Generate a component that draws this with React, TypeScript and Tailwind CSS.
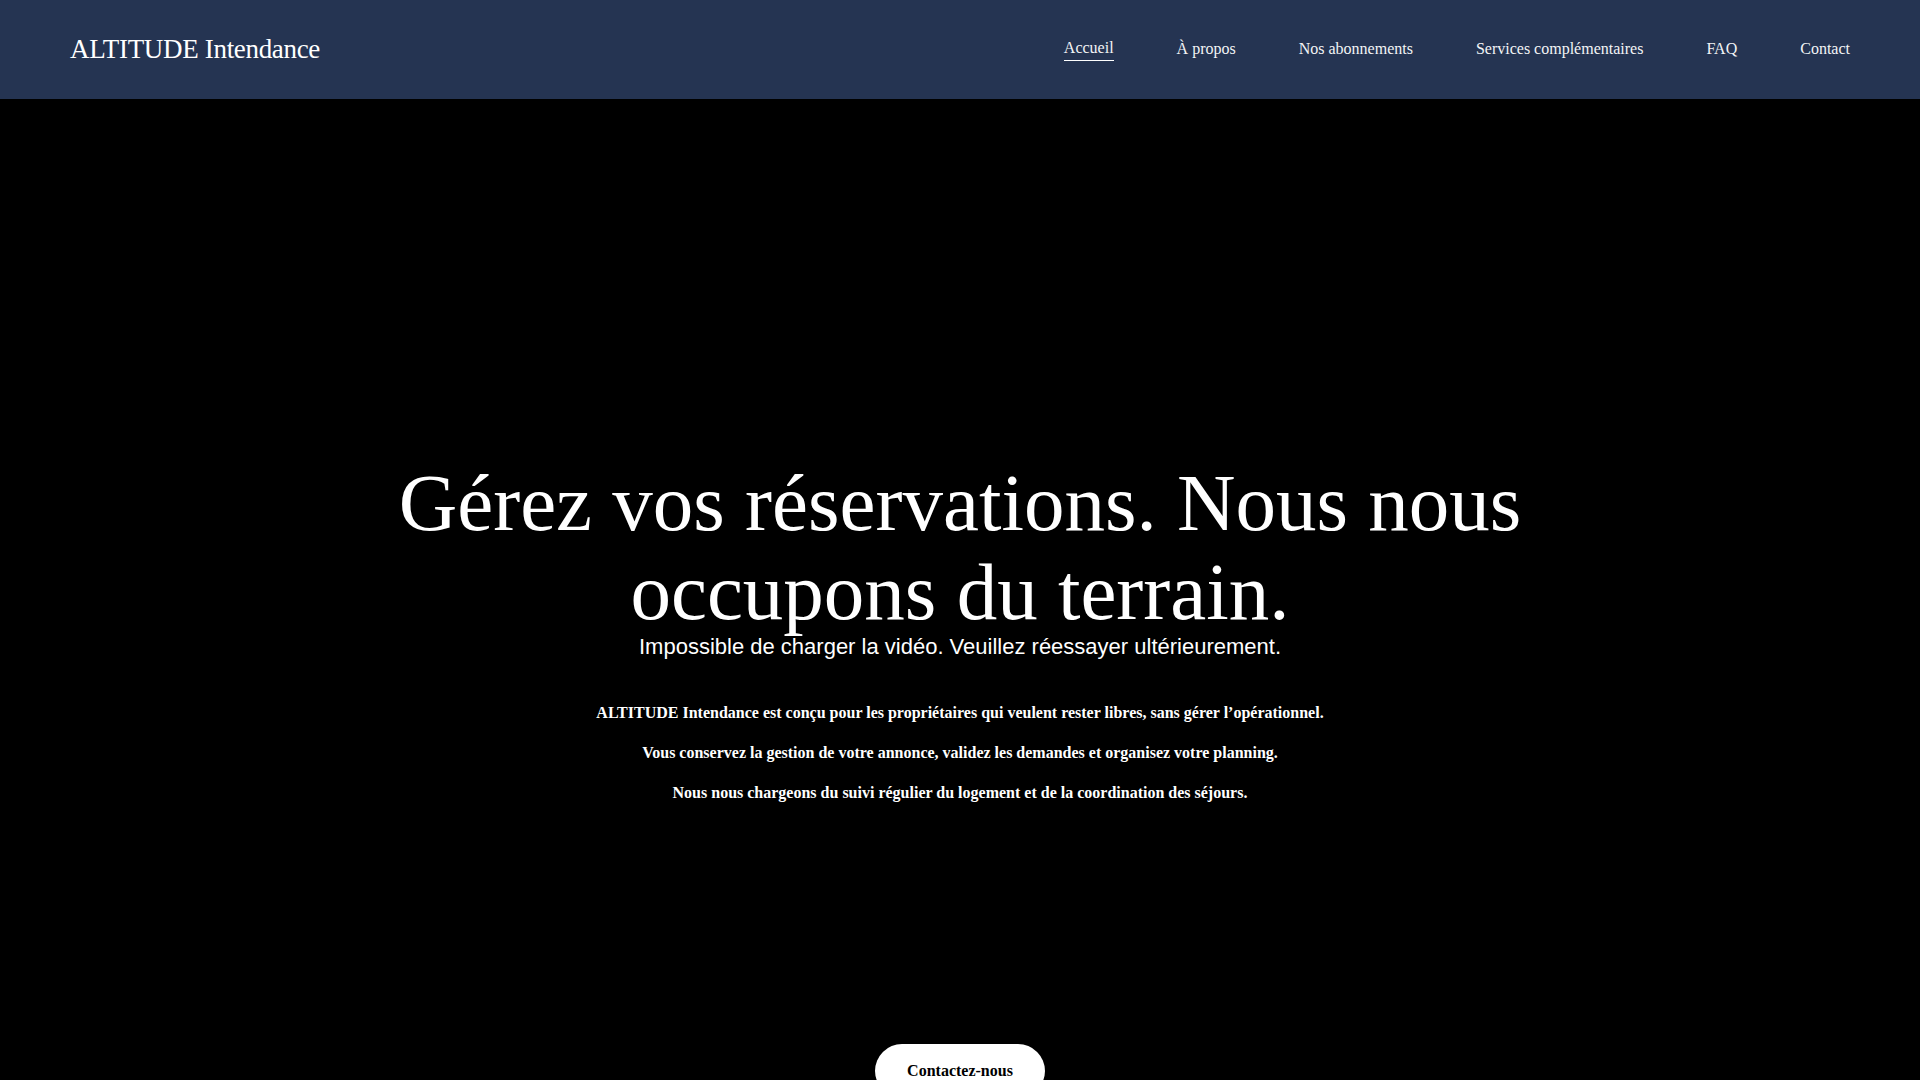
const links = [
  { label: 'Accueil', active: true },
  { label: 'À propos' },
  { label: 'Nos abonnements' },
  { label: 'Services complémentaires' },
  { label: 'FAQ' },
  { label: 'Contact' },
]

export default function App() {
  return (
    <div className="min-h-screen bg-black font-['Liberation_Serif',serif]">
      <header className="flex h-[99px] items-center justify-between bg-[#253452] px-[70px]">
        <a href="#" className="text-[27px] leading-[1.1] tracking-[-0.012em] text-white">
          ALTITUDE Intendance
        </a>
        <nav className="flex items-center gap-[63px] pb-[2px] text-base text-[#f3f4f6]">
          {links.map((l) =>
            l.active ? (
              <a key={l.label} href="#" className="inline-block border-b border-white leading-6">
                {l.label}
              </a>
            ) : (
              <a key={l.label} href="#" className="inline-block leading-6">
                {l.label}
              </a>
            )
          )}
        </nav>
      </header>

      <section className="relative flex h-[1200px] flex-col items-center pt-[360px] text-center text-white">
        {/* video failed to load, the player shows its message */}
        <div className="absolute inset-x-0 top-[535px] font-['Liberation_Sans',sans-serif] text-[22px] leading-[1.15]">
          Impossible de charger la vidéo. Veuillez réessayer ultérieurement.
        </div>

        <h1 className="relative max-w-[1200px] text-[81px] font-normal leading-[1.1]">
          Gérez vos réservations. Nous nous occupons du terrain.
        </h1>

        <div className="relative mt-[64px] space-y-4 text-base font-bold leading-6">
          <p>ALTITUDE Intendance est conçu pour les propriétaires qui veulent rester libres, sans gérer l’opérationnel.</p>
          <p>Vous conservez la gestion de votre annonce, validez les demandes et organisez votre planning.</p>
          <p>Nous nous chargeons du suivi régulier du logement et de la coordination des séjours.</p>
        </div>

        <a
          href="#"
          className="relative mt-[239px] rounded-full bg-white px-8 py-[15px] text-base font-bold leading-6 text-black"
        >
          Contactez-nous
        </a>
      </section>
    </div>
  )
}
